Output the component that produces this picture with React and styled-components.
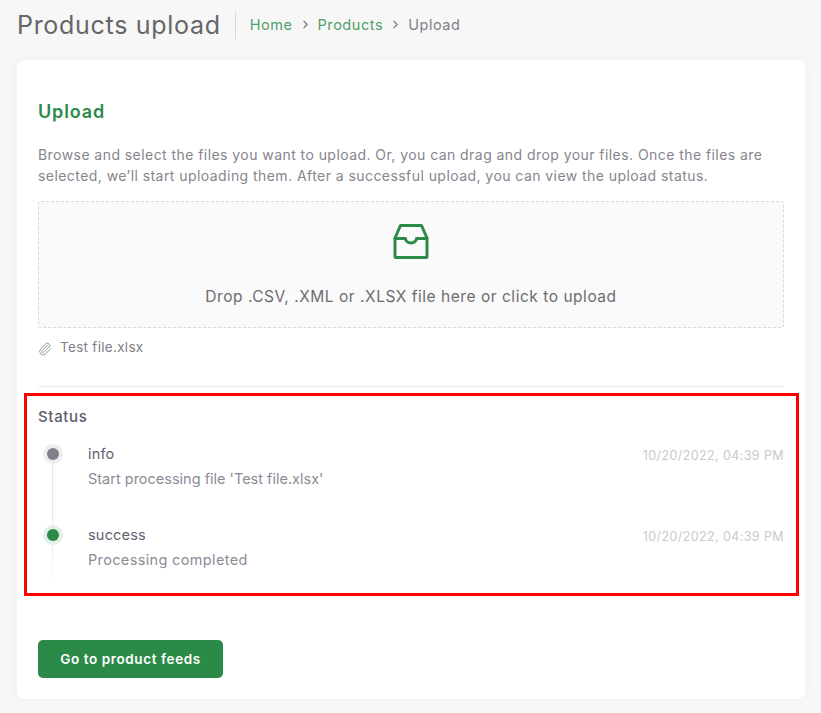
import React from "react";
import styled, { createGlobalStyle } from "styled-components";
import { Paperclip, ChevronRight } from "lucide-react";

const Global = createGlobalStyle`
  html, body { margin: 0; padding: 0; background: #f7f7f8; }
  body { font-family: Inter, "Open Sans", sans-serif; overflow: hidden; }
`;
const Page = styled.div`
  height: 713px;
  padding: 0 16px 0 17px;
  box-sizing: border-box;
`;
const Header = styled.header`
  display: flex;
  align-items: center;
  height: 50px;
`;
const Title = styled.h1`
  margin: 0;
  padding-right: 14px;
  font-size: 25px;
  line-height: 28px;
  font-weight: 400;
  letter-spacing: 0.7px;
  color: #666668;
  border-right: 1px solid #d9d9dc;
`;
const Crumbs = styled.nav`
  display: flex;
  align-items: center;
  margin-left: 14px;
  margin-top: -1px;
  font-size: 14.5px;
  letter-spacing: 0.55px;
  color: #808088;
`;
const Crumb = styled.span`
  color: ${(p) => (p.$link ? "#4f9f68" : "#808088")};
`;
const Sep = styled(ChevronRight)`
  margin: 0 6px;
  color: #77777d;
`;
const Card = styled.main`
  margin-top: 10px;
  height: 639px;
  box-sizing: border-box;
  padding: 41px 21px 0;
  background: #fff;
  border-radius: 8px;
  box-shadow: 0 0 14px rgba(0, 0, 0, 0.035);
`;
const SectionTitle = styled.h2`
  margin: 0;
  font-size: 18px;
  line-height: 22px;
  font-weight: 600;
  letter-spacing: 0.85px;
  color: #2b8a47;
`;
const Intro = styled.p`
  margin: 21px 0 0;
  font-size: 14px;
  line-height: 21px;
  letter-spacing: 0.44px;
  color: #85858d;
`;
const Drop = styled.div`
  margin-top: 15px;
  height: 127px;
  box-sizing: border-box;
  display: flex;
  flex-direction: column;
  align-items: center;
  padding-top: 22px;
  background: #fafafa;
  border: 1px dashed #d9d9dc;
  border-radius: 3px;
`;
const DropText = styled.div`
  margin-top: 27px;
  font-size: 15.5px;
  line-height: 20px;
  letter-spacing: 0.53px;
  color: #6c6c70;
`;
const FileRow = styled.div`
  display: flex;
  align-items: center;
  gap: 8px;
  margin-top: 9px;
  height: 20px;
  font-size: 13.5px;
  letter-spacing: 0.3px;
  color: #808086;
`;
const Clip = styled(Paperclip)`
  color: #8a8a8f;
  margin-top: 3px;
`;
const Divider = styled.hr`
  margin: 29px 0 0;
  border: 0;
  border-top: 1px solid #e9e9f0;
`;
const StatusBox = styled.section`
  margin: 6px -15px 0 -14px;
  height: 203px;
  box-sizing: border-box;
  padding: 12px 12px 0 11px;
  border: 3px solid #ff0000;
`;
const StatusTitle = styled.h3`
  margin: 0;
  font-size: 15px;
  line-height: 18px;
  font-weight: 500;
  letter-spacing: 0.65px;
  color: #5d5d6e;
`;
const Timeline = styled.ol`
  list-style: none;
  margin: 19px 0 0;
  padding: 0;
`;
const Item = styled.li`
  position: relative;
  height: 81px;
  padding: 0 0 0 50px;
  &::before {
    content: "";
    position: absolute;
    left: 14px;
    top: 12px;
    height: ${(p) => (p.$last ? "46px" : "81px")};
    width: 1px;
    background: ${(p) =>
      p.$last ? "linear-gradient(#e8e8f4, #ffffff)" : "#e8e8f4"};
  }
`;
const Dot = styled.span`
  position: absolute;
  left: 9px;
  top: 3px;
  width: 12px;
  height: 12px;
  border-radius: 50%;
  background: ${(p) => p.$color};
  box-shadow: 0 0 0 4px ${(p) => p.$ring};
`;
const ItemHead = styled.div`
  display: flex;
  justify-content: space-between;
  align-items: flex-end;
  height: 18px;
`;
const Level = styled.span`
  font-size: 14.5px;
  line-height: 18px;
  letter-spacing: 0.2px;
  color: #5f5f72;
`;
const When = styled.time`
  position: relative;
  top: 1px;
  font-size: 12.5px;
  line-height: 16px;
  letter-spacing: 0.4px;
  color: #c9c9ce;
`;
const Message = styled.div`
  margin-top: 7px;
  font-size: 14.5px;
  line-height: 18px;
  letter-spacing: ${(p) => p.$spacing};
  color: #8b8b96;
`;
const Button = styled.button`
  display: block;
  margin-top: 44px;
  width: 185px;
  height: 38px;
  padding: 0;
  border: 0;
  border-radius: 5px;
  background: #2b8a47;
  color: #fff;
  font-family: inherit;
  font-size: 13.5px;
  font-weight: 600;
  letter-spacing: 0.6px;
`;

const InboxIcon = () => (
  <svg width="36" height="36" viewBox="0 0 36 36" fill="none" stroke="#2b8a47" strokeWidth="3" strokeLinejoin="round" strokeLinecap="round">
    <path d="M7.5 1.5H28.5L34 14V32.5a1 1 0 0 1-1 1H3a1 1 0 0 1-1-1V14Z" />
    <path d="M2 14.5H12.5a5.5 4.5 0 0 0 11 0H34" />
  </svg>
);

export default function App() {
  return (
    <Page>
      <Global />
      <Header>
        <Title>Products upload</Title>
        <Crumbs>
          <Crumb $link>Home</Crumb>
          <Sep size={13} />
          <Crumb $link>Products</Crumb>
          <Sep size={13} />
          <Crumb>Upload</Crumb>
        </Crumbs>
      </Header>
      <Card>
        <SectionTitle>Upload</SectionTitle>
        <Intro>
          Browse and select the files you want to upload. Or, you can drag and drop your files. Once the files are
          <br />
          selected, we’ll start uploading them. After a successful upload, you can view the upload status.
        </Intro>
        <Drop>
          <InboxIcon />
          <DropText>Drop .CSV, .XML or .XLSX file here or click to upload</DropText>
        </Drop>
        <FileRow>
          <Clip size={14} strokeWidth={1.5} />
          Test file.xlsx
        </FileRow>
        <Divider />
        <StatusBox>
          <StatusTitle>Status</StatusTitle>
          <Timeline>
            <Item>
              <Dot $color="#80808a" $ring="#eeeeef" />
              <ItemHead>
                <Level>info</Level>
                <When>10/20/2022, 04:39 PM</When>
              </ItemHead>
              <Message $spacing="0">Start processing file 'Test file.xlsx'</Message>
            </Item>
            <Item $last>
              <Dot $color="#2b8a47" $ring="#e4efe8" />
              <ItemHead>
                <Level>success</Level>
                <When>10/20/2022, 04:39 PM</When>
              </ItemHead>
              <Message $spacing="0.35px">Processing completed</Message>
            </Item>
          </Timeline>
        </StatusBox>
        <Button>Go to product feeds</Button>
      </Card>
    </Page>
  );
}
